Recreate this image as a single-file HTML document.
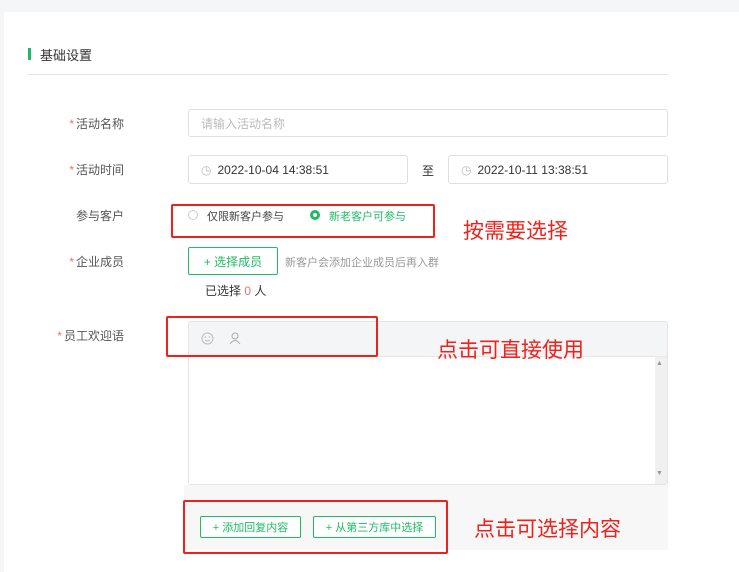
<!DOCTYPE html>
<html><head><meta charset="utf-8"><style>
*{margin:0;padding:0;box-sizing:border-box}
body{width:739px;height:562px;background:#f5f6f8;font-family:"Liberation Sans","Noto Sans CJK SC",sans-serif;position:relative;overflow:hidden;color:#333}
.card{position:absolute;left:4px;top:12px;width:735px;height:560px;background:#fff}
.a{position:absolute}
.lbl{position:absolute;font-size:12px;color:#555;text-align:right;width:100px;left:24px}
.lbl i{color:#f56c6c;font-style:normal;margin-right:2px}
.inp{position:absolute;border:1px solid #dcdfe6;border-radius:3px;background:#fff;font-size:12px;color:#333;padding-left:12px;display:flex;align-items:center}
.red{position:absolute;border:2px solid #f0201a;border-radius:2px}
.rt{position:absolute;color:#f0201a;font-size:21px;line-height:24px}
.btn{position:absolute;border:1px solid #1fbb64;color:#1fbb64;font-size:11px;display:flex;align-items:center;justify-content:center;background:#fff;border-radius:2px}
</style></head><body>
<div class="card"></div>
<div class="a" style="left:28px;top:48px;width:3px;height:12px;background:#1fbb64"></div>
<div class="a" style="left:40px;top:45px;font-size:13px;color:#333">基础设置</div>
<div class="a" style="left:28px;top:74px;width:640px;height:1px;background:#e4e4e4"></div>

<div class="lbl" style="top:115px"><i>*</i>活动名称</div>
<div class="inp" style="left:188px;top:109px;width:480px;height:28px;color:#bbb">请输入活动名称</div>

<div class="lbl" style="top:161px"><i>*</i>活动时间</div>
<div class="inp" style="left:188px;top:155px;width:220px;height:29px"><span style="color:#bbb;margin-right:6px">◷</span>2022-10-04 14:38:51</div>
<div class="a" style="left:422px;top:162px;font-size:12px">至</div>
<div class="inp" style="left:448px;top:155px;width:220px;height:29px"><span style="color:#bbb;margin-right:6px">◷</span>2022-10-11 13:38:51</div>

<div class="lbl" style="top:207px">参与客户</div>
<div class="a" style="left:188px;top:210px;width:10px;height:10px;border:1px solid #ccc;border-radius:50%"></div>
<div class="a" style="left:207px;top:208px;font-size:11px;color:#444">仅限新客户参与</div>
<div class="a" style="left:310px;top:210px;width:10px;height:10px;border:3px solid #1fbb64;border-radius:50%"></div>
<div class="a" style="left:329px;top:208px;font-size:11px;color:#1fbb64">新老客户可参与</div>
<div class="red" style="left:171px;top:204px;width:264px;height:34px"></div>
<div class="rt" style="left:463px;top:220px">按需要选择</div>

<div class="lbl" style="top:253px"><i>*</i>企业成员</div>
<div class="btn" style="left:188px;top:247px;width:90px;height:28px;font-size:12px">+ 选择成员</div>
<div class="a" style="left:285px;top:254px;font-size:11px;color:#999">新客户会添加企业成员后再入群</div>
<div class="a" style="left:205px;top:282px;font-size:12px;color:#333">已选择 <span style="color:#f56c6c">0</span> 人</div>

<div class="lbl" style="top:327px"><i>*</i>员工欢迎语</div>
<div class="a" style="left:188px;top:321px;width:480px;height:164px;border:1px solid #e4e4e4;border-radius:3px;background:#f4f5f7"></div>
<div class="a" style="left:189px;top:356px;width:478px;height:128px;background:#fff;border-top:1px solid #e8e8e8"></div>
<div class="a" style="left:655px;top:357px;width:12px;height:127px;background:#f0f0f0"></div>
<div class="a" style="left:656px;top:360px;font-size:7px;color:#999">▲</div>
<div class="a" style="left:656px;top:470px;font-size:7px;color:#999">▼</div>
<svg class="a" style="left:201px;top:332px" width="13" height="13" viewBox="0 0 13 13"><circle cx="6.5" cy="6.5" r="5.5" fill="none" stroke="#bbb"/><circle cx="4.5" cy="5" r=".8" fill="#bbb"/><circle cx="8.5" cy="5" r=".8" fill="#bbb"/><path d="M4 8 Q6.5 10 9 8" fill="none" stroke="#bbb"/></svg>
<svg class="a" style="left:229px;top:332px" width="12" height="13" viewBox="0 0 12 13"><circle cx="6" cy="4" r="3" fill="none" stroke="#aaa"/><path d="M1 12 Q6 5 11 12" fill="none" stroke="#aaa"/></svg>
<div class="red" style="left:166px;top:316px;width:212px;height:41px"></div>
<div class="rt" style="left:437px;top:339px">点击可直接使用</div>

<div class="a" style="left:184px;top:485px;width:484px;height:65px;background:#f7f7f7"></div>
<div class="btn" style="left:200px;top:516px;width:101px;height:22px">+ 添加回复内容</div>
<div class="btn" style="left:313px;top:516px;width:123px;height:22px">+ 从第三方库中选择</div>
<div class="red" style="left:183px;top:500px;width:265px;height:54px"></div>
<div class="rt" style="left:474px;top:518px">点击可选择内容</div>
</body></html>
